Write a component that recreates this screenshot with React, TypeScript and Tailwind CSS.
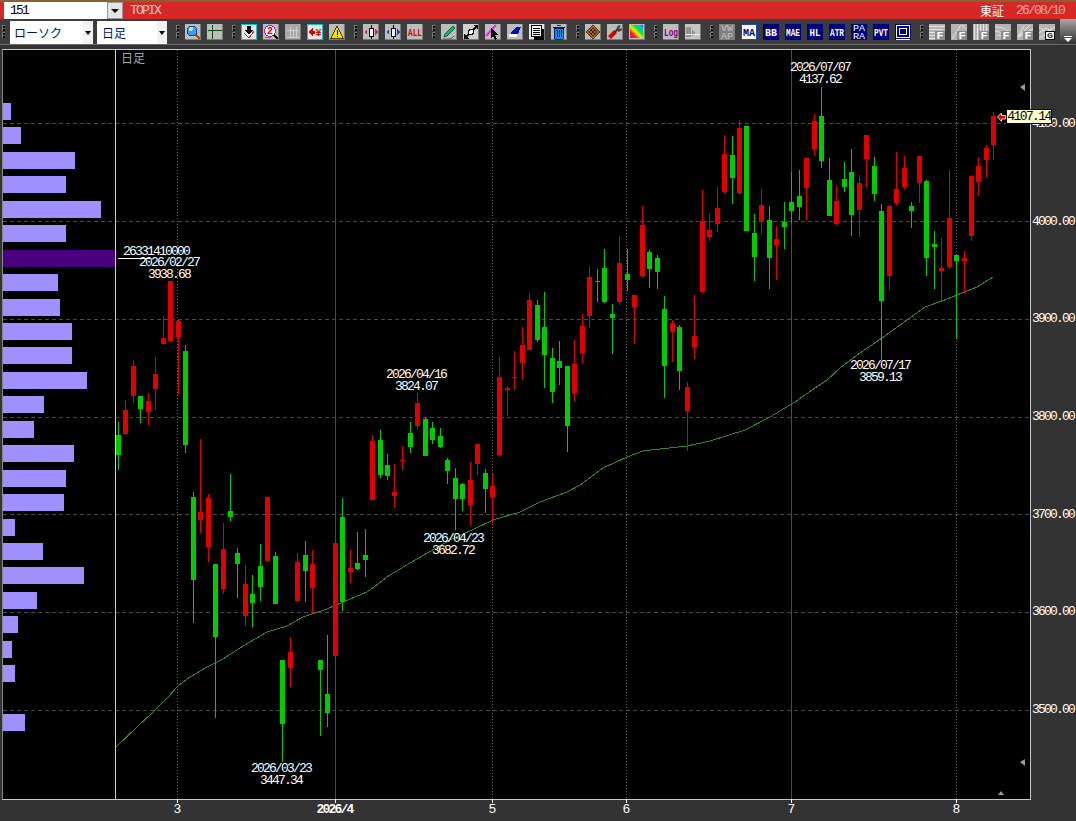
import type { ReactNode } from "react";

type Candle = [number, number, number, number, number, "r" | "g"];

// x, wick top, wick bottom, body top, body bottom, colour (page pixels)
const candles: Candle[] = [
  [118, 422, 470, 435, 455, "g"], [125, 400, 434, 410, 434, "r"], [133, 360, 403, 366, 396, "r"], [140, 396, 423, 396, 409, "g"],
  [148, 393, 425, 401, 412, "r"], [155, 357, 410, 374, 389, "r"], [163, 316, 345, 338, 344, "r"], [170, 281, 342, 281, 341, "r"],
  [178, 320, 394, 321, 337, "r"], [185, 345, 453, 351, 445, "g"], [193, 492, 623, 497, 580, "g"], [200, 439, 533, 512, 520, "r"],
  [208, 494, 562, 498, 547, "r"], [215, 564, 718, 564, 637, "g"], [223, 523, 594, 549, 589, "r"], [230, 474, 521, 511, 517, "g"],
  [237, 548, 598, 553, 564, "g"], [245, 565, 626, 584, 616, "r"], [252, 575, 627, 594, 603, "g"], [260, 544, 601, 566, 587, "g"],
  [267, 497, 561, 497, 561, "r"], [275, 552, 604, 556, 604, "g"], [282, 660, 762, 660, 724, "g"], [290, 637, 687, 652, 668, "r"],
  [297, 553, 601, 562, 601, "r"], [305, 541, 602, 555, 571, "g"], [312, 550, 613, 564, 588, "r"], [320, 660, 736, 660, 670, "g"],
  [327, 635, 727, 694, 713, "g"], [335, 543, 657, 543, 656, "r"], [342, 498, 611, 517, 602, "g"], [350, 550, 583, 568, 572, "r"],
  [357, 532, 570, 563, 569, "g"], [365, 529, 577, 555, 560, "g"], [372, 435, 500, 441, 500, "r"], [380, 430, 478, 440, 475, "g"],
  [387, 454, 480, 465, 476, "g"], [394, 464, 508, 492, 496, "r"], [402, 446, 470, 460, 461, "r"], [410, 422, 453, 433, 447, "g"],
  [417, 393, 430, 403, 426, "r"], [425, 417, 456, 419, 456, "g"], [432, 422, 444, 428, 440, "g"], [440, 428, 448, 436, 447, "g"],
  [447, 458, 484, 460, 471, "g"], [455, 468, 530, 478, 499, "g"], [462, 483, 511, 484, 499, "g"], [470, 462, 525, 480, 505, "r"],
  [477, 444, 475, 444, 464, "r"], [485, 469, 513, 473, 489, "g"], [492, 474, 523, 486, 497, "r"], [499, 357, 457, 377, 455, "r"],
  [507, 386, 416, 388, 390, "r"], [514, 351, 390, 377, 378, "r"], [522, 327, 380, 345, 363, "r"], [529, 293, 350, 300, 350, "r"],
  [537, 300, 342, 305, 340, "g"], [544, 292, 388, 327, 355, "g"], [552, 348, 403, 358, 392, "g"], [559, 341, 385, 361, 368, "g"],
  [567, 366, 452, 366, 426, "g"], [574, 340, 401, 364, 393, "r"], [582, 314, 363, 326, 353, "r"], [589, 266, 328, 277, 316, "r"],
  [597, 269, 302, 281, 282, "g"], [604, 249, 303, 268, 302, "g"], [612, 304, 354, 314, 318, "g"], [619, 236, 305, 263, 302, "r"],
  [627, 249, 291, 274, 280, "g"], [634, 295, 344, 295, 307, "r"], [642, 206, 277, 225, 276, "r"], [649, 250, 288, 252, 269, "g"],
  [657, 255, 289, 258, 272, "g"], [664, 296, 398, 309, 366, "g"], [672, 320, 362, 323, 332, "r"], [679, 325, 390, 327, 371, "g"],
  [687, 382, 451, 387, 411, "r"], [694, 295, 359, 336, 347, "r"], [702, 190, 293, 221, 292, "r"], [709, 213, 241, 230, 237, "r"],
  [717, 187, 232, 208, 224, "r"], [724, 135, 194, 154, 192, "r"], [732, 136, 204, 155, 178, "g"], [739, 120, 194, 128, 193, "r"],
  [746, 126, 231, 126, 231, "g"], [754, 214, 281, 233, 257, "g"], [761, 189, 235, 205, 221, "r"], [769, 206, 289, 220, 258, "g"],
  [776, 226, 280, 239, 245, "r"], [784, 202, 249, 222, 227, "g"], [791, 172, 223, 202, 211, "g"], [799, 170, 220, 196, 207, "g"],
  [806, 158, 220, 158, 188, "r"], [814, 114, 155, 121, 149, "r"], [821, 87, 168, 116, 161, "g"], [829, 158, 216, 180, 216, "g"],
  [836, 186, 225, 201, 224, "r"], [844, 162, 192, 179, 187, "g"], [851, 149, 236, 172, 215, "g"], [859, 175, 237, 183, 210, "r"],
  [866, 135, 187, 135, 159, "r"], [874, 157, 201, 166, 194, "g"], [881, 204, 360, 211, 301, "g"], [889, 206, 290, 206, 276, "r"],
  [896, 152, 205, 189, 203, "r"], [904, 156, 189, 168, 187, "r"], [911, 202, 228, 206, 211, "g"], [919, 156, 203, 156, 183, "r"],
  [926, 180, 276, 181, 258, "g"], [934, 231, 289, 244, 247, "g"], [941, 238, 301, 268, 271, "r"], [949, 170, 269, 218, 267, "r"],
  [956, 255, 339, 255, 261, "g"], [964, 251, 293, 258, 261, "r"], [971, 175, 241, 176, 236, "r"], [978, 157, 196, 166, 182, "r"],
  [986, 145, 177, 148, 160, "r"], [993, 112, 160, 116, 145, "r"],
];

const maLine =
  "116,747 137,727 153,712 167,698 178,686 187,679 207,667 223,659 243,646 267,632 287,626 303,617 327,609 343,602 367,592 390,575 410,563 450,540 472,530 493,520 520,512 540,502 567,492 580,485 603,468 627,457 643,451 660,449 687,446 710,441 745,430 770,417 795,402 812,390 827,380 840,368 857,355 882,338 907,320 925,307 942,301 957,295 977,287 993,277";

// y, right end of the bar
const profile: [number, number][] = [
  [103, 11], [127, 21], [152, 75], [176, 66], [201, 101], [225, 66], [250, 115], [274, 58], [299, 60], [323, 72], [347, 72], [372, 87],
  [396, 44], [421, 34], [445, 74], [470, 66], [494, 64], [519, 15], [543, 43], [567, 84], [592, 37], [616, 18], [641, 12], [665, 15], [714, 25],
];

const notes: [number, number, string, string][] = [
  [820, 71, "2026/07/07", "4137.62"],
  [169, 266, "2026/02/27", "3938.68"],
  [416, 378, "2026/04/16", "3824.07"],
  [453, 542, "2026/04/23", "3682.72"],
  [880, 369, "2026/07/17", "3859.13"],
  [281, 772, "2026/03/23", "3447.34"],
];

const gridY = [123, 221, 319, 417, 514, 612, 710];
const dotted = [177, 492, 626, 956];
const axis = ["4100.00", "4000.00", "3900.00", "3800.00", "3700.00", "3600.00", "3500.00"];

function Ico({ children }: { children: ReactNode }) {
  return (
    <svg width="16" height="16" viewBox="0 0 16 16" className="block shrink-0" shapeRendering="crispEdges">
      {children}
    </svg>
  );
}

function Grip() {
  return (
    <div className="w-[6px] h-4 flex flex-col items-end justify-between py-[1px] shrink-0">
      <div className="w-[3px] h-[3px] bg-black border-l border-t border-[#777]" />
      <div className="w-[3px] h-[3px] bg-black border-l border-t border-[#777]" />
      <div className="w-[3px] h-[3px] bg-black border-l border-t border-[#777]" />
      <div className="w-[3px] h-[3px] bg-black border-l border-t border-[#777]" />
    </div>
  );
}

const Face = ({ fill = "#bcbcbc" }: { fill?: string }) => (
  <>
    <rect width="16" height="16" fill={fill} />
    <rect x="15" width="1" height="16" fill="#7c7c7c" />
    <rect y="15" width="16" height="1" fill="#7c7c7c" />
  </>
);

const Cyan = () => <rect x=".5" y=".5" width="15" height="15" fill="#e8e8e8" stroke="#10c0d0" />;

// icon caption, squeezed to the button width like the bitmap captions in the app
function Txt({ x = 8, y = 12, size = 10, width = 14, fill = "#fff", bold = false, children }: { x?: number; y?: number; size?: number; width?: number; fill?: string; bold?: boolean; children: string }) {
  const sx = width / (children.length * 0.6 * size);
  return (
    <text transform={`translate(${x} ${y}) scale(${sx} 1)`} textAnchor="middle" fill={fill} fontSize={size} fontWeight={bold ? "bold" : "normal"} fontFamily="'Liberation Mono', monospace">
      {children}
    </text>
  );
}

function Tech({ a, b, width = 14 }: { a: string; b?: string; width?: number }) {
  return (
    <Ico>
      <rect width="16" height="16" fill="#000080" />
      {b ? (
        <>
          <Txt y={7} size={8.5} width={12}>{a}</Txt>
          <Txt y={14.500} size={8.5} width={12}>{b}</Txt>
        </>
      ) : (
        <Txt y={12} size={10.5} width={width} bold>{a}</Txt>
      )}
    </Ico>
  );
}

function Fan({ letter = "F", children }: { letter?: string; children: ReactNode }) {
  return (
    <Ico>
      <rect width="16" height="16" fill="#b4b4b4" />
      <g stroke="#e4e4e4" fill="none">{children}</g>
      {letter === "G" ? (
        <>
          <rect x="6.500" y="7.500" width="9" height="8" fill="#f4f4f4" stroke="#000" />
          <Txt x={11} y={14} size={8} width={6} fill="#333" bold>G</Txt>
        </>
      ) : (
        <>
          <rect x="6" y="7" width="10" height="9" fill="#8c8c8c" />
          <Txt x={11} y={15} size={10} width={7} bold>F</Txt>
        </>
      )}
    </Ico>
  );
}

function Toolbar() {
  return (
    <div className="h-[25px] bg-[#3c3c3c] flex items-center pl-[1px] gap-[6px]">
      <div className="-ml-[2px] w-[6px]"><Grip /></div>
      <div className="flex gap-1 h-[23px] self-end -ml-[1px] font-['Noto_Sans_CJK_JP',sans-serif] text-[12px] text-[#001070]">
        <div className="w-[83px] bg-white flex items-center justify-between pl-1">
          <span>ローソク</span>
          <span className="w-[10px] h-full bg-[#f2f2f2] flex items-center justify-center">
            <span className="w-0 h-0 border-x-[3px] border-x-transparent border-t-[4px] border-t-black" />
          </span>
        </div>
        <div className="w-[70px] bg-white flex items-center justify-between pl-[5px]">
          <span>日足</span>
          <span className="w-[10px] h-full bg-[#f2f2f2] flex items-center justify-center">
            <span className="w-0 h-0 border-x-[3px] border-x-transparent border-t-[4px] border-t-black" />
          </span>
        </div>
      </div>
      <Grip />
      <Ico><Face /><circle cx="7" cy="7" r="5" fill="#3f9fef" stroke="#1040a0" /><circle cx="6" cy="5" r="2" fill="#bfe4ff" /><path d="M11 11l4 4" stroke="#a04818" strokeWidth="2" /></Ico>
      <Ico><Face /><path d="M5 1v14M1 6h14" stroke="#104a10" /></Ico>
      <Grip />
      <Ico><Cyan /><path d="M6 2h4v4h2l-4 5-4-5h2z" fill="#000" /><path d="M3 9l5 5 5-7" fill="none" stroke="#e02020" /></Ico>
      <Ico><Face /><circle cx="7" cy="7" r="5.500" fill="#fff" stroke="#e000e0" /><Txt x={7} y={10} size={10} width={6} fill="#e00000" bold>2</Txt><path d="M11 11l4 4" stroke="#000" strokeWidth="2" /><path d="M2 13h6" stroke="#10c000" /></Ico>
      <Ico><Face fill="#a8a8a8" /><path d="M2 6h12M5 3v10M11 3v10M8 5v8M2 13h12" stroke="#cfcfcf" /></Ico>
      <Ico><Cyan /><path d="M1.500 8l4-4v2.500h2v3h-2V12z" fill="#e00000" /><Txt x={11.500} y={12} size={11} width={6} fill="#e00000" bold>¥</Txt></Ico>
      <Ico><Face /><path d="M8 2l6 12H2z" fill="#f0e000" stroke="#404000" /><path d="M8 6v5M8 12v1" stroke="#000" /></Ico>
      <Grip />
      <Ico><Face /><path d="M8 1v14" stroke="#000" /><rect x="6" y="4" width="4" height="8" fill="#fff" stroke="#000" /><path d="M1 8l3-3v6zM15 8l-3-3v6z" fill="#f02020" /></Ico>
      <Ico><Face /><path d="M8 1v14" stroke="#000" /><rect x="6" y="4" width="4" height="8" fill="#fff" stroke="#000" /><path d="M1 8l3-3v6zM15 8l-3-3v6z" fill="#2040f0" /></Ico>
      <Ico><Face /><Txt y={12} size={11} width={14} fill="#e00000" bold>ALL</Txt></Ico>
      <Grip />
      <Ico><Face /><path d="M4 10l8-8 2 2-8 8-3 1z" fill="#10c040" stroke="#064" shapeRendering="auto" /><path d="M2 15c4 0 8 1 11-3" fill="none" stroke="#555" shapeRendering="auto" /></Ico>
      <Ico><Face fill="#d0d0d0" /><path d="M2 14l12-12" stroke="#000" strokeWidth="2" shapeRendering="auto" /><path d="M1 15v-5l5 5zM15 1v5l-5-5z" fill="#000" /><circle cx="8" cy="8" r="2.500" fill="#fff" stroke="#000" /></Ico>
      <Ico><Face /><path d="M1 12L11 1" stroke="#f020f0" strokeWidth="2" shapeRendering="auto" /><path d="M6 4l8 7h-4l2 4-2 1-2-4-2 2z" fill="#000" /></Ico>
      <Ico><Face /><path d="M3 9l7-6h4l-3 7H5z" fill="#0010c0" /><path d="M2 10h8v3H2z" fill="#fff" /></Ico>
      <Ico><Face fill="#e8e8e8" /><path d="M5 5h10v11H5z" fill="#000" /><rect x="2.500" y="1.500" width="10" height="11" fill="#fff" stroke="#000" /><path d="M4 4h7M4 6h7M4 8h7M4 10h7" stroke="#000" /></Ico>
      <Ico><Face /><path d="M3 4h10l-1 11H4z" fill="#0090f0" stroke="#002060" /><path d="M2 3h12M6 1h4M6 6v7M8 6v7M10 6v7" stroke="#002060" /></Ico>
      <Grip />
      <Ico><Face /><path d="M8 1l7 7-7 7-7-7z" fill="#a86820" stroke="#503000" /><path d="M4 8l4-4M6 10l4-4M8 12l4-4M4 8l4 4M6 6l4 4M8 4l4 4" stroke="#302000" /></Ico>
      <Ico><Face /><path d="M2.500 13.500l6-6" stroke="#d80000" strokeWidth="4" shapeRendering="auto" /><path d="M8 8l3-3" stroke="#333" strokeWidth="2" shapeRendering="auto" /><path d="M10 3l2-2 2 1-2 2 2 1 1-1v2l-3 2-3-2z" fill="#444" shapeRendering="auto" /></Ico>
      <Ico>
        <defs>
          <linearGradient id="rb" x1="0" y1="1" x2="1" y2="0">
            <stop offset="0" stopColor="#e000e0" /><stop offset=".25" stopColor="#f02020" /><stop offset=".45" stopColor="#f0f000" /><stop offset=".65" stopColor="#00e040" /><stop offset=".85" stopColor="#00c0f0" /><stop offset="1" stopColor="#2040f0" />
          </linearGradient>
        </defs>
        <Face /><rect x="1" y="1" width="13" height="13" fill="url(#rb)" />
      </Ico>
      <Grip />
      <Ico><Face /><Txt y={12} size={11} width={14} fill="#800080" bold>Log</Txt></Ico>
      <Ico><Face fill="#c4c4c4" /><path d="M1 3h5v10H1zM7 6l4 3-4 3z" fill="#909090" /><path d="M1 10h14" stroke="#eee" /></Ico>
      <Grip />
      <Ico><rect width="16" height="16" fill="#808080" /><Txt y={7} size={8.5} width={12} fill="#c4c4c4">VW</Txt><Txt y={14.500} size={8.5} width={12} fill="#c4c4c4">AP</Txt></Ico>
      <Ico><rect x=".5" y=".5" width="15" height="15" fill="#fff" stroke="#2040e0" /><Txt y={11.500} size={10} width={12} fill="#000080" bold>MA</Txt></Ico>
      <Tech a="BB" width={12} />
      <Tech a="MAE" />
      <Tech a="HL" width={11} />
      <Tech a="ATR" />
      <Tech a="PA" b="RA" />
      <Tech a="PVT" />
      <Ico><rect width="16" height="16" fill="#000080" /><rect x="1.500" y="1.500" width="13" height="12" fill="none" stroke="#fff" /><rect x="4.500" y="4.500" width="7" height="6" fill="none" stroke="#fff" /><path d="M1 15h14" stroke="#fff" /></Ico>
      <Grip />
      <Fan><path d="M0 2.500h16M0 5.500h14M0 8.500h6M0 11.500h6M0 14.500h6" /></Fan>
      <Fan><path d="M1 15L10 1M11 1l4 4" shapeRendering="auto" /></Fan>
      <Fan><path d="M1.500 0v16M4.500 0v16M7.500 0v7M10.500 0v7M13.500 0v7" /></Fan>
      <Fan><path d="M0 3c5 0 9 0 16 6M0 7c3 0 5 1 7 3M2 12c1-1 3-1 5 0" shapeRendering="auto" /></Fan>
      <Fan><path d="M1 13L13 1M1 13L16 5M1 13L7 2" shapeRendering="auto" /></Fan>
      <Fan letter="G"><path d="M0 3l7 5 9-5M0 9l7-5 9 5M0 14l7-4" shapeRendering="auto" /></Fan>
      <div className="w-4 h-[25px] shrink-0 -ml-[1px] bg-gradient-to-b from-[#a8a8a8] to-[#333] flex flex-col items-center justify-end pb-[2px] gap-[1px]">
        <span className="w-[8px] h-[1px] bg-white" />
        <span className="w-0 h-0 border-x-[4px] border-x-transparent border-t-[4px] border-t-white" />
      </div>
    </div>
  );
}

function Chart() {
  return (
    <svg width="1027" height="749" viewBox="3 50 1027 749" className="block bg-black font-['Liberation_Mono',monospace]">
      <g shapeRendering="crispEdges">
        {gridY.map((y) => (
          <line key={y} x1="3" x2="1030" y1={y + 0.5} y2={y + 0.5} stroke="#4a4a4a" strokeDasharray="4 3" />
        ))}
        {dotted.map((x) => (
          <line key={x} x1={x + 0.5} x2={x + 0.5} y1="50" y2="799" stroke="#666" strokeDasharray="1 2" />
        ))}
        <line x1="335.5" x2="335.5" y1="50" y2="799" stroke="#4c4c4c" />
        <line x1="791.5" x2="791.5" y1="50" y2="799" stroke="#4c4c4c" />
        {profile.map(([y, end]) => (
          <rect key={y} x="3" y={y} width={end - 3} height="17" fill={y === 250 ? "#480080" : "#a090ff"} />
        ))}
        <line x1="115.500" x2="115.500" y1="50" y2="799" stroke="#d0d0d0" />
        <line x1="118" x2="150" y1="258.500" y2="258.500" stroke="#fff" />
        <polyline points={maLine} fill="none" stroke="#2a8a2a" />
        {candles.map(([x, wt, wb, bt, bb, c]) => {
          const fill = c === "r" ? "#e00000" : "#00cc00";
          return (
            <g key={x} fill={fill}>
              <rect x={x} y={wt} width="1" height={wb - wt} />
              <rect x={x - 2} y={bt} width="5" height={bb - bt} />
            </g>
          );
        })}
      </g>
      <g className="fill-white text-[13px] tracking-[-1.8px]" textAnchor="middle">
        {notes.map(([x, y, date, price]) => (
          <g key={date}>
            <text x={x} y={y}>{date}</text>
            <text x={x} y={y + 12}>{price}</text>
          </g>
        ))}
        <text x="156" y="255">26331410000</text>
      </g>
      <text x="121" y="63" fill="#aaa" fontSize="12" fontFamily="'Noto Sans CJK JP', sans-serif">日足</text>
      <path d="M1020 87l5-3v7zM1020 762l5-3v7zM998 795l3-4 3 4z" fill="#999" />
      <path d="M997.500 117l4-4v2.500h4v3.500h-4v2.500z" fill="#e00000" stroke="#fff" strokeWidth=".8" />
    </svg>
  );
}

function Tick({ label, className }: { label: string; className: string }) {
  return (
    <div className={className}>
      <span className="w-px h-[4px] bg-white" />
      <span className="pr-[2px] leading-[13px]">{label}</span>
    </div>
  );
}

export default function App() {
  return (
    <div className="relative w-[1076px] h-[821px] overflow-hidden bg-[#333] font-['Liberation_Mono',monospace] text-white">
      {/* Title bar */}
      <div className="h-[2px] bg-[#85622f]" />
      <div className="h-[17px] bg-[#d62828] flex items-center pl-1 pr-[12px]">
        <div className="w-[103px] h-full bg-white text-black text-[13px] tracking-[-1.8px] pl-[6px] leading-[17px]">151</div>
        <div className="w-4 h-full bg-[#e4e4e4] border border-[#999] flex items-center justify-center">
          <span className="w-0 h-0 border-x-[4px] border-x-transparent border-t-[4px] border-t-black" />
        </div>
        <span className="ml-[7px] text-[13px] tracking-[-1.8px] text-[#f6cccc]">TOPIX</span>
        <span className="ml-auto text-[12px] font-['Noto_Sans_CJK_JP',sans-serif]">東証</span>
        <span className="ml-3 text-[13px] tracking-[-1.8px] text-[#eeaaaa]">26/08/10</span>
      </div>

      <Toolbar />
      <div className="h-[5px] border-t border-[#6a6a6a]" />

      {/* Chart and price axis */}
      <div className="flex items-start h-[751px]">
        <div className="ml-[2px] w-[1029px] h-[751px] border border-[#c8c8c8] border-l-[#888] shrink-0">
          <Chart />
        </div>
        <div className="flex flex-col pt-[26px] pl-[1px] text-[13px] tracking-[-1.8px]">
          {axis.map((v) => (
            <div key={v} className="h-[97.67px] flex items-center">{v}</div>
          ))}
        </div>
      </div>

      {/* Date axis */}
      <div className="h-[21px] flex items-start text-[13px] tracking-[-1.8px] pl-[147px] -mt-[1px]">
        <Tick label="3" className="w-[61px] flex flex-col items-center" />
        <Tick label="2026/4" className="w-[61px] ml-[97px] flex flex-col items-center font-bold" />
        <Tick label="5" className="w-[61px] ml-[96px] flex flex-col items-center" />
        <Tick label="6" className="w-[61px] ml-[73px] flex flex-col items-center" />
        <Tick label="7" className="w-[61px] ml-[104px] flex flex-col items-center" />
        <Tick label="8" className="w-[61px] ml-[104px] flex flex-col items-center" />
      </div>

      {/* Last price tag */}
      <div className="absolute left-[1006px] top-[109px] w-[46px] h-[15px] bg-[#ffffcc] border border-black text-black text-[13px] tracking-[-1.6px] leading-[13px] text-center">
        4107.14
      </div>
    </div>
  );
}
